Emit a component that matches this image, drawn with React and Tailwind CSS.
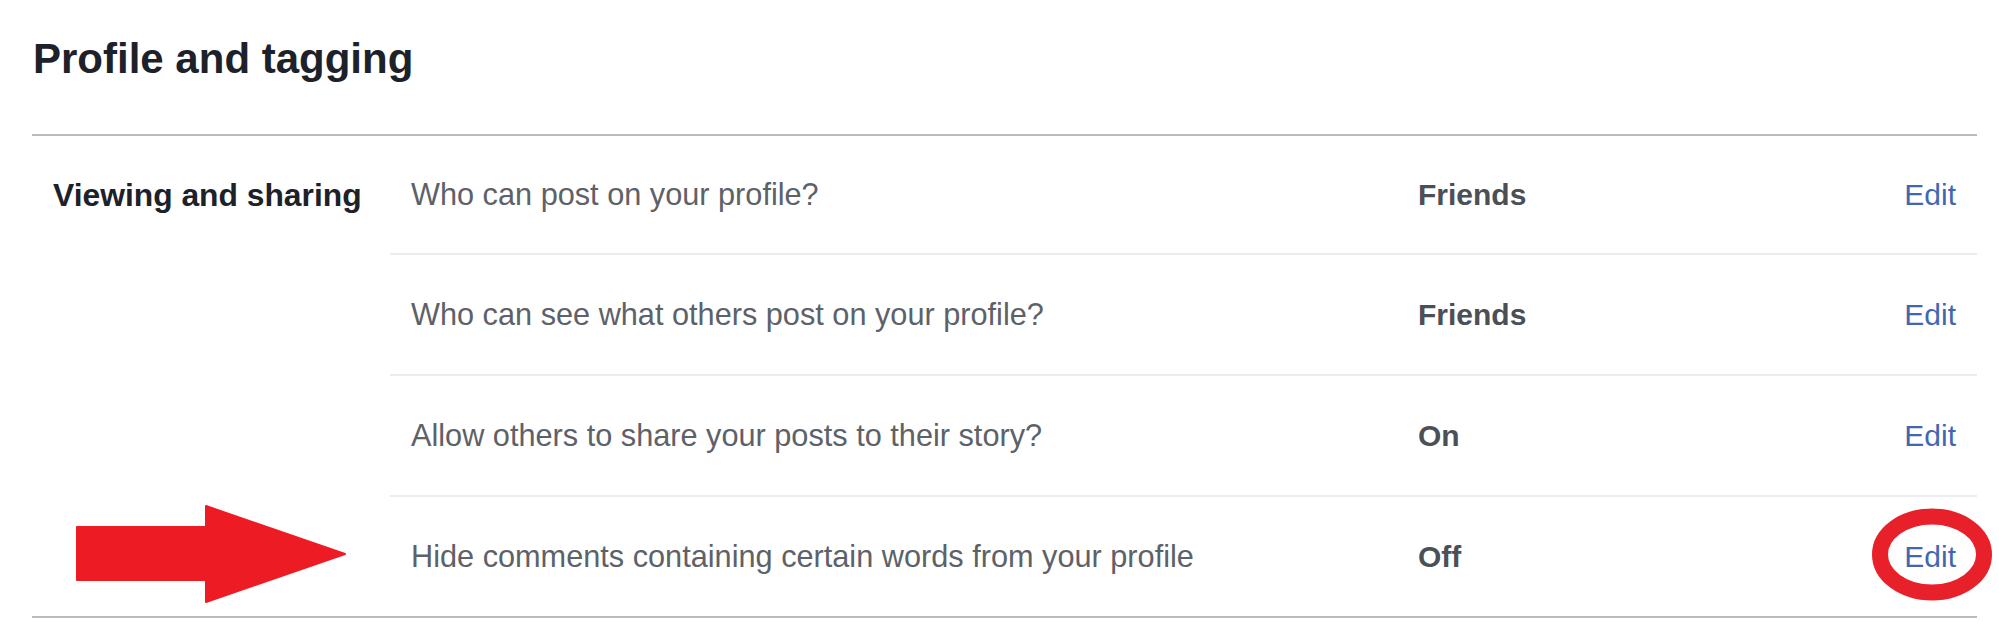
import React from "react";

const rows = [
  { q: "Who can post on your profile?", v: "Friends" },
  { q: "Who can see what others post on your profile?", v: "Friends" },
  { q: "Allow others to share your posts to their story?", v: "On" },
  { q: "Hide comments containing certain words from your profile", v: "Off" },
];

const rowH = ["h-[119px]", "h-[121px]", "h-[121px]", "h-[119px]"];

export default function App() {
  return (
    <div className="relative w-[1999px] h-[643px] bg-white overflow-hidden font-['Liberation_Sans',Arial,sans-serif]">
      <div className="ml-[32px] w-[1945px]">
        <div className="pt-[35px] pb-[51px] border-b-2 border-[#bcbcbc]">
          <h1 className="pl-[1px] text-[42px] leading-[48px] font-bold text-[#1d2129]">
            Profile and tagging
          </h1>
        </div>
        <div className="flex border-b-2 border-[#bcbcbc]">
          <div className="w-[358px] shrink-0">
            <div className="h-[117px] flex items-center pl-[21px]">
              <span className="text-[31.8px] leading-[36px] font-bold text-[#1d2129]">
                Viewing and sharing
              </span>
            </div>
          </div>
          <div className="flex-1">
            {rows.map((r, i) => (
              <div
                key={i}
                className={
                  i < rows.length - 1
                    ? rowH[i] + " flex items-center pl-[21px] pr-[21px] border-b-2 border-[#ebecee]"
                    : rowH[i] + " flex items-center pl-[21px] pr-[21px]"
                }
              >
                <div className="w-[1007px] shrink-0 text-[30.7px] leading-[36px] text-[#5d6168]">
                  {r.q}
                </div>
                <div className="flex-1 text-[30px] leading-[36px] font-bold text-[#4b4f56]">
                  {r.v}
                </div>
                <a className="text-[30px] leading-[36px] text-[#4267b2]">Edit</a>
              </div>
            ))}
          </div>
        </div>
      </div>

      <svg
        className="absolute left-0 top-0 pointer-events-none"
        width="1999"
        height="643"
        viewBox="0 0 1999 643"
      >
        <polygon
          points="77,527 206,527 206,506 345,554 206,602 206,580 77,580"
          fill="#ed1c24"
          stroke="#ed1c24"
          strokeWidth="2"
          strokeLinejoin="round"
        />
        <ellipse
          cx="1932"
          cy="554.5"
          rx="52"
          ry="38"
          fill="none"
          stroke="#e8202a"
          strokeWidth="16"
        />
      </svg>
    </div>
  );
}
